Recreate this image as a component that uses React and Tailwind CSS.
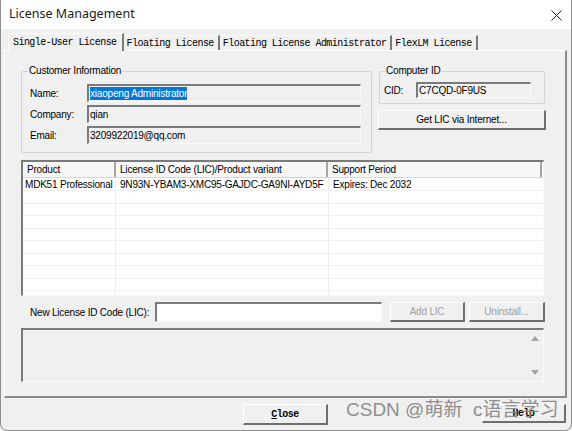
import React from 'react';

const sunken =
  'border-t-2 border-l-2 border-t-[#7a7a7a] border-l-[#7a7a7a] border-r border-b border-r-[#fafafa] border-b-[#fafafa]';
const raised =
  'border-t border-l border-t-white border-l-white border-r-2 border-b-2 border-r-[#6e6e6e] border-b-[#6e6e6e] bg-[#f0f0f0] flex items-center justify-center';
const mono = "font-['Liberation_Mono'] text-[10px] tracking-[-0.55px] text-black";

const rowHeights = [13, 13, 12, 13, 12, 13, 12, 13, 12, 5];

function Tab({ label, active }) {
  return (
    <div
      className={
        active
          ? `h-[18px] -mb-[1px] relative z-10 pl-[4px] pr-[5px] flex items-center bg-[#f0f0f0] border-t border-l border-white border-r-2 border-r-[#7a7a7a] ${mono}`
          : `h-[15px] pl-[3px] pr-[4px] flex items-center border-t border-t-[#f8f8f8] border-r-2 border-r-[#7a7a7a] ${mono}`
      }
    >
      {label}
    </div>
  );
}

function Field({ children }) {
  return (
    <div className={`w-[274px] h-[18px] bg-[#f0f0f0] ${sunken} flex items-center pl-[1px] text-[10px] tracking-[-0.2px] text-black`}>
      {children}
    </div>
  );
}

export default function App() {
  return (
    <div className="w-[572px] h-[431px] bg-[#f0f0f0] overflow-hidden relative font-['Liberation_Sans'] border-x border-b border-[#8e8e8e] rounded-b-[7px] text-black">
      {/* title bar */}
      <div className="h-[29px] bg-white flex items-center justify-between pl-[8px] pr-[9px]">
        <span className="text-[12.5px] font-['Noto_Sans'] text-[#1a1a1a]">License Management</span>
        <svg width="11" height="11" viewBox="0 0 11 11" className="mt-[1px]">
          <path d="M0.5 0.5 L10.5 10.5 M10.5 0.5 L0.5 10.5" stroke="#222" strokeWidth="1" />
        </svg>
      </div>

      {/* tabs */}
      <div className="mt-[4px] h-[17px] pl-[7px] flex items-end">
        <Tab label="Single-User License" active />
        <Tab label="Floating License" />
        <Tab label="Floating License Administrator" />
        <Tab label="FlexLM License" />
      </div>

      {/* tab panel */}
      <div className="ml-[3px] w-[563px] h-[348px] border-t border-l border-white border-r-2 border-b-2 border-r-[#8a8a8a] border-b-[#8a8a8a] text-[10px] tracking-[-0.2px]">
        <div className="mt-[13px] ml-[16px] flex gap-[6px]">
          <fieldset className="w-[351px] border border-[#d3d3d3] rounded-[2px] pl-[8px] pb-[8px]">
            <legend className="-ml-[2px] px-[1px] leading-[14px]">Customer Information</legend>
            <div className="mt-[6px] flex flex-col gap-[3px]">
              <div className="flex items-center">
                <span className="w-[57px]">Name:</span>
                <Field>
                  <span className="bg-[#0078d7] text-white leading-[13px]">xiaopeng Administrator</span>
                </Field>
              </div>
              <div className="flex items-center">
                <span className="w-[57px]">Company:</span>
                <Field>qian</Field>
              </div>
              <div className="flex items-center">
                <span className="w-[57px]">Email:</span>
                <Field>3209922019@qq.com</Field>
              </div>
            </div>
          </fieldset>

          <div className="w-[168px] flex flex-col">
            <fieldset className="ml-[1px] w-[166px] border border-[#d3d3d3] rounded-[2px] pl-[4px] pb-[5px]">
              <legend className="ml-[1px] px-[1px] leading-[14px]">Computer ID</legend>
              <div className="mt-[4px] flex items-center">
                <span className="w-[32px]">CID:</span>
                <div className={`w-[115px] h-[16px] bg-[#f0f0f0] ${sunken} flex items-center pl-[1px]`}>C7CQD-0F9US</div>
              </div>
            </fieldset>
            <div className={`mt-[6px] w-[168px] h-[20px] ${raised}`}>Get LIC via Internet...</div>
          </div>
        </div>

        {/* list view */}
        <div className={`mt-[7px] ml-[16px] w-[523px] h-[136px] bg-white ${sunken} overflow-hidden`}>
          <div className="h-[16px] flex bg-[#f7f7f7] border-b border-[#d8d8d8]">
            <div className="w-[93px] pl-[4px] flex items-center border-r-2 border-r-[#a8a8a8]">Product</div>
            <div className="w-[212px] pl-[4px] flex items-center border-r-2 border-r-[#a8a8a8]">License ID Code (LIC)/Product variant</div>
            <div className="w-[214px] pl-[4px] flex items-center border-r-2 border-r-[#a8a8a8]">Support Period</div>
          </div>
          {rowHeights.map((h, i) => (
            <div
              key={i}
              className="flex border-b border-[#f0f0f0]"
              style={{ height: h }}
            >
              <div className="w-[93px] pl-[2px] flex items-center border-r border-[#ededed] whitespace-nowrap">
                {i === 0 ? 'MDK51 Professional' : ''}
              </div>
              <div className="w-[213px] pl-[4px] flex items-center border-r border-[#ededed] whitespace-nowrap">
                {i === 0 ? '9N93N-YBAM3-XMC95-GAJDC-GA9NI-AYD5F' : ''}
              </div>
              <div className="w-[214px] pl-[4px] flex items-center whitespace-nowrap">
                {i === 0 ? 'Expires: Dec 2032' : ''}
              </div>
            </div>
          ))}
        </div>

        {/* new LIC row */}
        <div className="mt-[6px] ml-[16px] w-[524px] h-[20px] flex items-center">
          <span className="ml-[9px] w-[125px]">New License ID Code (LIC):</span>
          <div className={`w-[227px] h-[20px] bg-white ${sunken}`} />
          <div className={`ml-[8px] w-[75px] h-[20px] ${raised} text-[#a0a0a0]`}>Add LIC</div>
          <div className={`ml-[4px] w-[76px] h-[20px] ${raised} text-[#a0a0a0]`}>Uninstall...</div>
        </div>

        {/* message area */}
        <div className={`mt-[6px] ml-[16px] w-[523px] h-[54px] bg-[#f0f0f0] ${sunken} flex justify-end`}>
          <div className="w-[16px] flex flex-col items-center justify-between py-[6px]">
            <svg width="8" height="5" viewBox="0 0 8 5">
              <path d="M4 0 L8 5 L0 5 Z" fill="#a3a3a3" />
            </svg>
            <svg width="8" height="5" viewBox="0 0 8 5">
              <path d="M0 0 L8 0 L4 5 Z" fill="#a3a3a3" />
            </svg>
          </div>
        </div>
      </div>

      {/* footer buttons */}
      <div className="mt-[6px] flex">
        <div className={`ml-[242px] w-[85px] h-[21px] ${raised} ${mono} font-bold`}>
          <span className="underline">C</span>lose
        </div>
        <div className={`ml-[154px] w-[84px] h-[19px] ${raised} ${mono} font-bold`}>Help</div>
      </div>

      {/* watermark */}
      <div className="absolute left-[345px] top-[398px] text-[19px] leading-[24px] text-[#8f8f8f] font-['Liberation_Sans','Noto_Sans_CJK_SC',sans-serif] whitespace-nowrap">
        CSDN @萌新&nbsp;&nbsp;c语言学习
      </div>
    </div>
  );
}
